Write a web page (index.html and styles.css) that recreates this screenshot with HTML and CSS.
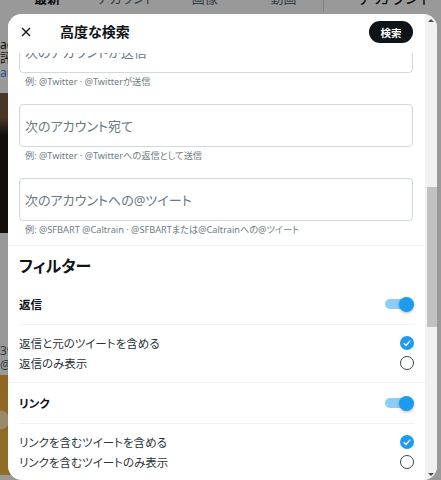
FILE: index.html
```html
<!DOCTYPE html>
<html lang="ja">
<head>
  <meta charset="UTF-8" />
  <meta name="viewport" content="width=device-width, initial-scale=1.0" />
  <title>高度な検索</title>
  <link rel="stylesheet" href="styles.css">
</head>
<body>
  <div class="page">
    <div class="main-col">
      <div class="tabs">
        <span class="tab active">最新</span>
        <span class="tab">アカウント</span>
        <span class="tab">画像</span>
        <span class="tab">動画</span>
      </div>
      <div class="tweet">
        <p class="tweet-line">ac</p>
        <p class="tweet-line">評</p>
        <p class="tweet-line link">ar</p>
        <div class="tweet-photo"></div>
        <p class="tweet-line meta">39</p>
        <p class="tweet-line meta">@</p>
        <div class="tweet-photo orange"></div>
      </div>
    </div>
    <div class="side-col">
      <span class="side-title">アカウント</span>
    </div>
  </div>

  <div class="backdrop"></div>

  <div class="modal">
    <div class="modal-main">
      <header class="modal-header">
        <button class="close-btn" aria-label="閉じる">
          <svg viewBox="0 0 10 10" width="10" height="10">
            <path d="M1 1 L9 9 M9 1 L1 9" />
          </svg>
        </button>
        <h1 class="modal-title">高度な検索</h1>
        <button class="search-btn">検索</button>
      </header>

      <div class="modal-body">
        <div class="scroll-content">
          <div class="accounts">
            <div class="field">
              <div class="input">次のアカウントが送信</div>
              <p class="hint">例: @Twitter · @Twitterが送信</p>
            </div>
            <div class="field">
              <div class="input">次のアカウント宛て</div>
              <p class="hint">例: @Twitter · @Twitterへの返信として送信</p>
            </div>
            <div class="field">
              <div class="input">次のアカウントへの@ツイート</div>
              <p class="hint">例: @SFBART @Caltrain · @SFBARTまたは@Caltrainへの@ツイート</p>
            </div>
          </div>

          <section class="filter-group">
            <h2 class="group-title">フィルター</h2>
            <div class="toggle-row">
              <span>返信</span>
              <span class="switch on"><span class="knob"></span></span>
            </div>
            <div class="options">
              <div class="option">
                <span>返信と元のツイートを含める</span>
                <span class="radio checked">
                  <svg viewBox="0 0 14 14" width="14" height="14"><path d="M3.8 7.2 L6 9.4 L10.3 4.6" /></svg>
                </span>
              </div>
              <div class="option">
                <span>返信のみ表示</span>
                <span class="radio"></span>
              </div>
            </div>
          </section>

          <section class="filter-group">
            <div class="toggle-row">
              <span>リンク</span>
              <span class="switch on"><span class="knob"></span></span>
            </div>
            <div class="options">
              <div class="option">
                <span>リンクを含むツイートを含める</span>
                <span class="radio checked">
                  <svg viewBox="0 0 14 14" width="14" height="14"><path d="M3.8 7.2 L6 9.4 L10.3 4.6" /></svg>
                </span>
              </div>
              <div class="option">
                <span>リンクを含むツイートのみ表示</span>
                <span class="radio"></span>
              </div>
            </div>
          </section>
        </div>
      </div>
    </div>

    <div class="scrollbar">
      <span class="arrow up"></span>
      <div class="track"><div class="thumb"></div></div>
      <span class="arrow down"></span>
    </div>
  </div>
</body>
</html>
```

FILE: styles.css
```css
* {
  margin: 0;
  padding: 0;
  box-sizing: border-box;
}

body {
  width: 441px;
  height: 480px;
  overflow: hidden;
  background: #fff;
  font-family: "Noto Sans", "Noto Sans CJK JP", sans-serif;
  font-feature-settings: "palt";
  color: #0f1419;
  position: relative;
}

/* page behind the dialog */
.page {
  display: flex;
  height: 480px;
}

.main-col {
  width: 323px;
}

.tabs {
  display: grid;
  grid-template-columns: repeat(4, 1fr);
  height: 24px;
  margin-top: -15px;
  padding-left: 8px;
  align-items: center;
}

.tab {
  text-align: center;
  font-size: 13px;
  color: #536471;
}

.tab.active {
  color: #0f1419;
  font-weight: 700;
}

.tweet {
  padding-top: 29px;
  overflow: hidden;
}

.tweet-line {
  font-size: 12px;
  line-height: 14px;
  white-space: nowrap;
}

.tweet-line.link {
  color: #1d9bf0;
}

.tweet-line.meta {
  color: #536471;
}

.tweet-photo {
  height: 140px;
  margin: 13px 0 111px;
  background:
    linear-gradient(125deg, transparent 0 40%, #b9c8e0 41% 43%, transparent 44%),
    linear-gradient(60deg, transparent 0 55%, #8fa6c8 56% 58%, transparent 59%),
    linear-gradient(180deg, #7a5a3c 0 18%, #241a14 30% 100%);
}

.tweet-photo.orange {
  height: 100px;
  margin: 3px 0 0;
  background:
    radial-gradient(circle at 0 45%, #ffe6b0 0 9px, transparent 10px),
    linear-gradient(180deg, #f3a93a, #f0b63c);
}

.side-col {
  flex: 1;
  border-left: 1px solid #cfd9de;
  height: 12px;
}

.side-title {
  display: block;
  margin: -12px 0 0 34px;
  font-size: 17px;
  line-height: 20px;
}

.backdrop {
  position: absolute;
  inset: 0;
  background: rgba(0, 0, 0, 0.4);
}

/* dialog */
.modal {
  position: absolute;
  top: 14px;
  left: 8px;
  width: 429px;
  height: 466px;
  display: flex;
  background: #fff;
  border-radius: 14px;
  overflow: hidden;
}

.modal-main {
  flex: 1;
  display: flex;
  flex-direction: column;
  min-width: 0;
}

.modal-header {
  height: 39px;
  display: flex;
  align-items: center;
  padding: 0 12px 3px 13px;
  background: #fff;
  position: relative;
  z-index: 1;
}

.close-btn {
  width: 10px;
  height: 10px;
  border: none;
  background: none;
  display: flex;
}

.close-btn svg {
  stroke: #0f1419;
  stroke-width: 1.4;
  fill: none;
}

.modal-title {
  margin-left: 29px;
  font-size: 14px;
  font-weight: 700;
  line-height: 20px;
}

.search-btn {
  margin-left: auto;
  width: 44px;
  height: 22px;
  border: none;
  border-radius: 11px;
  background: #0f1419;
  color: #fff;
  font-family: inherit;
  font-size: 10.5px;
  font-weight: 700;
}

.modal-body {
  flex: 1;
  overflow: hidden;
}

.scroll-content {
  margin-top: -23px;
}

.accounts {
  padding: 0 12px 8px 11px;
}

.field + .field {
  margin-top: 15px;
}

.input {
  height: 43px;
  border: 1px solid #cfd9de;
  border-radius: 4px;
  padding: 0 5px;
  display: flex;
  align-items: center;
  font-size: 13px;
  color: #6b7884;
}

.hint {
  margin-top: 2px;
  padding-left: 6px;
  font-size: 9.2px;
  line-height: 14px;
  color: #6e7b85;
  white-space: nowrap;
}

.filter-group {
  border-top: 1px solid #eff3f4;
  padding: 0 11px;
}

.group-title {
  padding-top: 10px;
  margin-bottom: 8px;
  font-size: 16px;
  font-weight: 700;
  line-height: 20px;
}

.toggle-row {
  height: 41px;
  display: flex;
  align-items: center;
  justify-content: space-between;
  border-bottom: 1px solid #eff3f4;
  font-size: 11.5px;
  font-weight: 700;
}

.switch {
  position: relative;
  width: 29px;
  height: 15px;
  display: flex;
  justify-content: flex-end;
}

.switch::before {
  content: "";
  position: absolute;
  left: 0;
  top: 2.5px;
  width: 23px;
  height: 10px;
  border-radius: 5px;
  background: #8ecdf8;
}

.knob {
  position: relative;
  width: 15px;
  height: 15px;
  border-radius: 50%;
  background: #1d9bf0;
  box-shadow: 0 1px 3px rgba(0, 0, 0, 0.3);
}

.options {
  padding: 8px 0 9px;
}

.option {
  height: 20px;
  display: flex;
  align-items: center;
  justify-content: space-between;
  font-size: 11.5px;
  color: #2b333a;
}

.radio {
  width: 14px;
  height: 14px;
  border-radius: 50%;
  border: 1.3px solid #3c4650;
  display: flex;
}

.radio.checked {
  border: none;
  background: #1d9bf0;
}

.radio svg {
  stroke: #fff;
  stroke-width: 1.4;
  fill: none;
}

/* fake scrollbar */
.scrollbar {
  width: 12px;
  display: flex;
  flex-direction: column;
  background: #f1f1f1;
}

.arrow {
  height: 12px;
  display: flex;
  align-items: center;
  justify-content: center;
}

.arrow::before {
  content: "";
  border-left: 3px solid transparent;
  border-right: 3px solid transparent;
}

.arrow.up::before {
  border-bottom: 3px solid #505050;
}

.arrow.down::before {
  border-top: 3px solid #505050;
}

.track {
  flex: 1;
}

.thumb {
  margin: 161px 0 0 2px;
  height: 140px;
  background: #c1c1c1;
}
```
